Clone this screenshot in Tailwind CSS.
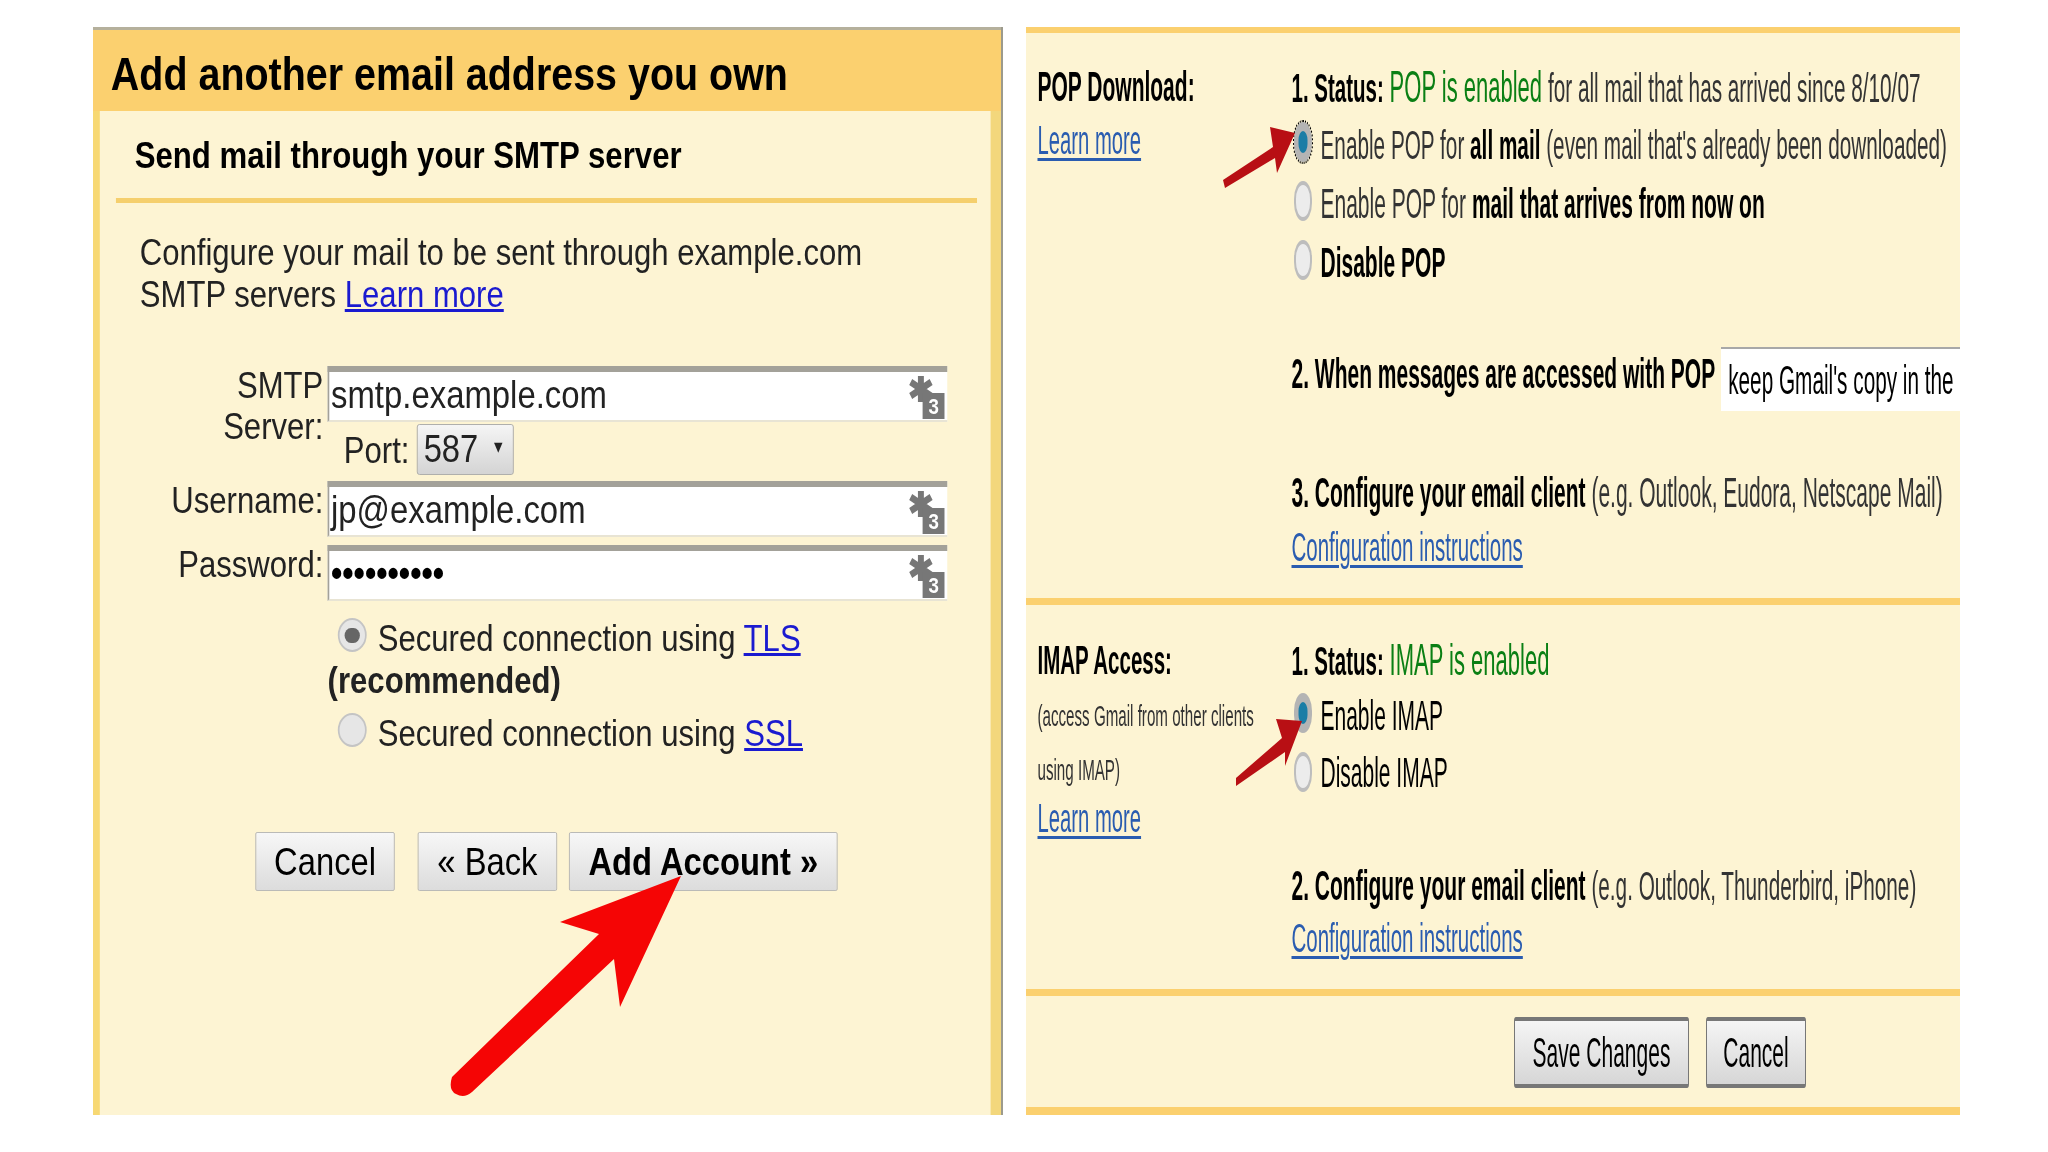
<!DOCTYPE html>
<html lang="en">

<head>
    <meta charset="UTF-8">
    <title>Gmail SMTP and POP settings</title>
    <script src="https://cdn.jsdelivr.net/npm/@tailwindcss/browser@4"></script>
</head>

<body class="relative bg-white w-[2048px] h-[1152px] overflow-hidden pt-[27px] pl-[93px] flex gap-[23px] font-['Liberation_Sans',Arial,sans-serif] text-[#222]">

    <!-- left panel: built wide, then squeezed like the picture -->
    <section class="w-[910px] h-[1088px] overflow-hidden shrink-0 border-r-2 border-r-[#9c9a8c]">
        <div class="w-[1071px] h-[1088px] origin-top-left scale-x-[.85] flex flex-col blur-[0.5px]">
            <div class="h-[84px] shrink-0 bg-[#fbd06f] border-t-[3px] border-[#b5b09c] pl-[21px] pt-[9px] flex items-center">
                <h1 class="text-[46.4px] font-bold text-black whitespace-nowrap">Add another email address you own</h1>
            </div>
            <div class="flex-1 bg-[#fdf4d3] border-l-8 border-l-[#f7d873] border-r-[15px] border-r-[#f3d77c] text-[36.6px]">
                <h2 class="mt-[21px] h-[48px] leading-[48px] pl-[41px] font-bold text-[36.7px] text-black whitespace-nowrap">Send mail through your SMTP server</h2>
                <div class="mt-[18px] ml-[19px] w-[1013px] h-[5px] bg-[#f5cf6d]"></div>
                <p class="mt-[29px] ml-[47px] leading-[42px] whitespace-nowrap">Configure your mail to be sent through example.com<br>SMTP servers <a href="#" class="text-[#1a1ad0] underline">Learn more</a></p>

                <div class="mt-[50px] flex">
                    <div class="w-[263px] -mt-[1px] text-right leading-[41px]">SMTP<br>Server:</div>
                    <div class="ml-[5px]">
                        <div class="relative w-[729px] h-[56px] bg-white border-t-[6px] border-l-2 border-[#a3a199] border-b-2 border-b-[#e8e4d4] text-[38.7px] leading-[46px] pl-[2px]">smtp.example.com
                            <svg class="absolute right-[3px] top-[3px] w-[44px] h-[44px]" viewBox="0 0 44 44">
                                <path d="M16 1V27M4 7L28 21M28 7L4 21" stroke="#777" stroke-width="7" fill="none"/>
                                <rect x="18" y="18" width="26" height="26" fill="#777"/>
                                <text x="31" y="39" text-anchor="middle" font-size="22" font-weight="700" fill="#fff">3</text>
                            </svg>
                        </div>
                        <div class="flex items-center h-[59px]">
                            <span class="ml-[19px] w-[86px]">Port:</span>
                            <div class="mt-[-5px] w-[114px] h-[51px] rounded-[3px] border border-[#a8a8a8] bg-gradient-to-b from-[#f5f5f5] to-[#d4d4d4] flex items-center pl-[7px] text-[38.5px]">587<span class="ml-[18px] text-[20px] mb-[6px]">▾</span></div>
                        </div>
                    </div>
                </div>

                <div class="flex">
                    <div class="w-[263px] -mt-[1px] text-right leading-[41px]">Username:</div>
                    <div class="ml-[5px] relative w-[729px] h-[56px] bg-white border-t-[6px] border-l-2 border-[#a3a199] border-b-2 border-b-[#e8e4d4] text-[38.7px] leading-[46px] pl-[2px]">jp@example.com
                        <svg class="absolute right-[3px] top-[3px] w-[44px] h-[44px]" viewBox="0 0 44 44">
                            <path d="M16 1V27M4 7L28 21M28 7L4 21" stroke="#777" stroke-width="7" fill="none"/>
                            <rect x="18" y="18" width="26" height="26" fill="#777"/>
                            <text x="31" y="39" text-anchor="middle" font-size="22" font-weight="700" fill="#fff">3</text>
                        </svg>
                    </div>
                </div>

                <div class="flex mt-[8px]">
                    <div class="w-[263px] -mt-[1px] text-right leading-[41px]">Password:</div>
                    <div class="ml-[5px] relative w-[729px] h-[56px] bg-white border-t-[6px] border-l-2 border-[#a3a199] border-b-2 border-b-[#e8e4d4] text-[38px] leading-[44px] pl-[2px] font-bold text-black">••••••••••
                        <svg class="absolute right-[3px] top-[3px] w-[44px] h-[44px]" viewBox="0 0 44 44">
                            <path d="M16 1V27M4 7L28 21M28 7L4 21" stroke="#777" stroke-width="7" fill="none"/>
                            <rect x="18" y="18" width="26" height="26" fill="#777"/>
                            <text x="31" y="39" text-anchor="middle" font-size="22" font-weight="700" fill="#fff">3</text>
                        </svg>
                    </div>
                </div>

                <div class="mt-[17px] ml-[268px] leading-[42px]">
                    <div class="flex items-center h-[42px] whitespace-nowrap">
                        <span class="ml-[12px] mb-[8px] mr-[13px] w-[34px] h-[34px] rounded-full border-2 border-[#c4c4c4] bg-[#e6e6e6] flex items-center justify-center"><span class="w-[18px] h-[15px] rounded-full bg-[#666]"></span></span>
                        <span>Secured connection using <a href="#" class="text-[#1a1ad0] underline">TLS</a></span>
                    </div>
                    <div class="font-bold">(recommended)</div>
                    <div class="mt-[11px] flex items-center h-[42px] whitespace-nowrap">
                        <span class="ml-[12px] mb-[8px] mr-[13px] w-[34px] h-[34px] rounded-full border-2 border-[#c4c4c4] bg-[#e6e6e6]"></span>
                        <span>Secured connection using <a href="#" class="text-[#1a1ad0] underline">SSL</a></span>
                    </div>
                </div>

                <div class="mt-[77px] ml-[183px] flex text-[38.5px] text-black">
                    <button class="w-[164px] h-[59px] rounded-[2px] border border-[#b4b4b4] bg-gradient-to-b from-[#f7f7f7] to-[#dcdcdc]">Cancel</button>
                    <button class="ml-[27px] w-[164px] h-[59px] rounded-[2px] border border-[#b4b4b4] bg-gradient-to-b from-[#f7f7f7] to-[#dcdcdc]">« Back</button>
                    <button class="ml-[14px] w-[316px] h-[59px] rounded-[2px] border border-[#b4b4b4] bg-gradient-to-b from-[#f7f7f7] to-[#dcdcdc] font-bold">Add Account »</button>
                </div>
            </div>
        </div>
    </section>

    <!-- right panel -->
    <section class="w-[934px] h-[1088px] overflow-hidden shrink-0">
        <div class="w-[1868px] h-[1088px] origin-top-left scale-x-[.5] bg-[#fdf4d3] text-[42px] text-black flex flex-col blur-[0.5px]">
            <div class="h-[6px] bg-[#fbd06f] shrink-0"></div>

            <div class="h-[565px] shrink-0 flex pl-[23px]">
                <div class="w-[508px] shrink-0 pt-[25px]">
                    <div class="h-[58px] leading-[58px] font-bold">POP Download:</div>
                    <a href="#" class="block w-fit h-[49px] leading-[49px] text-[40.5px] text-[#2a5cb0] underline decoration-[3px] underline-offset-4">Learn more</a>
                </div>
                <div class="flex-1 pt-[25px] whitespace-nowrap">
                    <div class="h-[58px] leading-[58px]"><b class="font-semibold text-[41px]">1. Status:</b> <span class="text-[#0a7f14] text-[44px]">POP is enabled</span> <span class="text-[#333] text-[41.5px]">for all mail that has arrived since 8/10/07</span></div>
                    <div class="h-[58px] flex items-center">
                        <span class="ml-[5px] mb-[6px] mr-[17px] w-[36px] h-[40px] shrink-0 rounded-full border-[9px] border-[#b4b4b4] bg-[#1a7da6] outline-2 outline-dotted outline-black"></span>
                        <span class="text-[41.5px]"><span class="text-[#333]">Enable POP for</span> <b>all mail</b> <span class="text-[#333]">(even mail that's already been downloaded)</span></span>
                    </div>
                    <div class="h-[59px] flex items-center">
                        <span class="ml-[5px] mb-[6px] mr-[17px] w-[36px] h-[40px] shrink-0 rounded-full border-4 border-[#bdbdbd] bg-[#ececec]"></span>
                        <span><span class="text-[#333]">Enable POP for</span> <b>mail that arrives from now on</b></span>
                    </div>
                    <div class="h-[59px] flex items-center">
                        <span class="ml-[5px] mb-[6px] mr-[17px] w-[36px] h-[40px] shrink-0 rounded-full border-4 border-[#bdbdbd] bg-[#ececec]"></span>
                        <b>Disable POP</b>
                    </div>
                    <div class="mt-[52px] h-[58px] flex items-center">
                        <b class="font-semibold">2. When messages are accessed with POP</b>
                        <div class="ml-[12px] mt-[12px] w-[600px] h-[64px] shrink-0 bg-white border-t-2 border-[#a8a8a8] pl-[14px] leading-[62px] text-[41.5px]">keep Gmail's copy in the</div>
                    </div>
                    <div class="mt-[62px] h-[58px] leading-[58px]"><b class="font-semibold">3. Configure your email client</b> <span class="text-[#333]">(e.g. Outlook, Eudora, Netscape Mail)</span></div>
                    <a href="#" class="block w-fit h-[50px] leading-[50px] text-[41px] text-[#2a5cb0] underline decoration-[3px] underline-offset-4">Configuration instructions</a>
                </div>
            </div>

            <div class="h-[7px] bg-[#fbd06f] shrink-0"></div>

            <div class="h-[384px] shrink-0 flex pl-[23px]">
                <div class="w-[508px] shrink-0 pt-[26px]">
                    <div class="h-[58px] leading-[58px] font-bold text-[41px]">IMAP Access:</div>
                    <div class="h-[54px] leading-[54px] text-[30.3px] text-[#333] whitespace-nowrap">(access Gmail from other clients</div>
                    <div class="h-[53px] leading-[53px] text-[30.3px] text-[#333]">using IMAP)</div>
                    <a href="#" class="block w-fit h-[44px] leading-[44px] text-[40.5px] text-[#2a5cb0] underline decoration-[3px] underline-offset-4">Learn more</a>
                </div>
                <div class="flex-1 pt-[26px] whitespace-nowrap">
                    <div class="h-[58px] leading-[58px]"><b class="font-semibold text-[41px]">1. Status:</b> <span class="text-[#0a7f14] text-[44px]">IMAP is enabled</span></div>
                    <div class="h-[53px] flex items-center">
                        <span class="ml-[5px] mb-[6px] mr-[17px] w-[36px] h-[40px] shrink-0 rounded-full border-[9px] border-[#b4b4b4] bg-[#1a7da6]"></span>
                        <span>Enable IMAP</span>
                    </div>
                    <div class="h-[61px] flex items-center">
                        <span class="ml-[5px] mb-[2px] mr-[17px] w-[36px] h-[40px] shrink-0 rounded-full border-4 border-[#bdbdbd] bg-[#ececec]"></span>
                        <span>Disable IMAP</span>
                    </div>
                    <div class="mt-[54px] h-[58px] leading-[58px]"><b class="font-semibold">2. Configure your email client</b> <span class="text-[#333] text-[41.5px]">(e.g. Outlook, Thunderbird, iPhone)</span></div>
                    <a href="#" class="block w-fit h-[46px] leading-[46px] text-[41px] text-[#2a5cb0] underline decoration-[3px] underline-offset-4">Configuration instructions</a>
                </div>
            </div>

            <div class="h-[7px] bg-[#fbd06f] shrink-0"></div>

            <div class="flex-1 pt-[21px] pl-[976px] flex">
                <button class="w-[350px] h-[71px] rounded-[4px] border-2 border-t-4 border-b-4 border-[#777] bg-gradient-to-b from-[#f5f5f5] to-[#d6d6d6]">Save Changes</button>
                <button class="ml-[34px] w-[200px] h-[71px] rounded-[4px] border-2 border-t-4 border-b-4 border-[#777] bg-gradient-to-b from-[#f5f5f5] to-[#d6d6d6]">Cancel</button>
            </div>

            <div class="h-[8px] bg-[#fbd06f] shrink-0"></div>
        </div>
    </section>

    <!-- arrows drawn over the screenshot -->
    <svg class="absolute left-0 top-0 w-[2048px] h-[1152px] pointer-events-none" viewBox="0 0 2048 1152">
        <path d="M681 876 L560 922 L599 934 L452 1077 Q448 1090 456 1094 Q464 1099 472 1092 L614 959 L620 1007 Z" fill="#f50505"/>
        <path d="M1295 133 L1270 127 L1273 147 L1223 180 L1225 188 L1275 158 L1277 173 Z" fill="#b80f14"/>
        <path d="M1302 721 L1276 719 L1282 738 L1236 778 L1236 786 L1285 752 L1285 766 Z" fill="#b80f14"/>
    </svg>
</body>

</html>
